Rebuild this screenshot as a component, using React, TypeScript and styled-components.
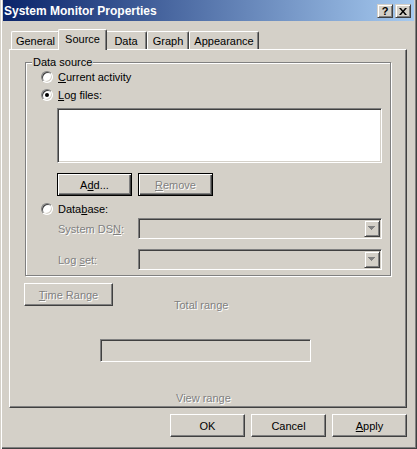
import React from 'react';
import styled, { createGlobalStyle, css } from 'styled-components';

const FACE = '#d4d0c8';

const Global = createGlobalStyle`
  html, body { margin: 0; padding: 0; background: ${FACE}; }
  body {
    font-family: "Liberation Sans", Arial, sans-serif;
    font-size: 11px;
    color: #000;
  }
`;

const Window = styled.div`
  width: 417px;
  height: 449px;
  box-sizing: border-box;
  background: ${FACE};
  display: flex;
  flex-direction: column;
  box-shadow: inset 1px 0 ${FACE}, inset 2px 0 #fff, inset -1px -1px #404040,
    inset -2px -2px #808080;
`;

const TitleBar = styled.div`
  height: 21px;
  margin: 0 3px;
  padding: 1px 3px 0 1px;
  box-sizing: border-box;
  background: linear-gradient(to right, #0a246a, #a6caf0);
  display: flex;
  align-items: center;
`;

const TitleText = styled.div`
  flex: 1;
  color: #fff;
  font-weight: bold;
  font-size: 12px;
  white-space: nowrap;
`;

const CaptionButton = styled.div`
  width: 16px;
  height: 14px;
  box-sizing: border-box;
  margin-left: 2px;
  background: ${FACE};
  border: 1px solid;
  border-color: ${FACE} #404040 #404040 ${FACE};
  box-shadow: inset 1px 1px #fff, inset -1px -1px #808080;
  display: flex;
  align-items: center;
  justify-content: center;
  font-weight: bold;
  font-size: 11px;
  line-height: 12px;
  color: #000;
`;

const Body = styled.div`
  flex: 1;
  display: flex;
  flex-direction: column;
  padding: 0 10px 0 9px;
`;

const TabStrip = styled.div`
  display: flex;
  align-items: flex-end;
  height: 20px;
  margin-top: 8px;
  padding-left: 2px;
`;

const Tab = styled.div<{ $w: number; $active?: boolean }>`
  width: ${(p) => p.$w}px;
  height: 18px;
  box-sizing: border-box;
  background: ${FACE};
  border-top: 1px solid #fff;
  border-left: 1px solid #fff;
  border-right: 1px solid #404040;
  border-radius: 2px 2px 0 0;
  box-shadow: inset -1px 0 #808080;
  display: flex;
  align-items: center;
  justify-content: center;
  padding-top: 1px;
  white-space: nowrap;
  ${(p) =>
    p.$active &&
    css`
      position: relative;
      z-index: 1;
      width: ${p.$w + 4}px;
      height: 21px;
      margin: 0 -2px -1px -2px;
      padding-top: 0;
      padding-bottom: 3px;
    `}
`;

const Panel = styled.div`
  height: 359px;
  box-sizing: border-box;
  border: 1px solid;
  border-color: #fff #404040 #404040 #fff;
  box-shadow: inset -1px -1px #808080;
  display: flex;
  flex-direction: column;
`;

const GroupBox = styled.div`
  position: relative;
  margin: 12px 15px 0 15px;
  height: 214px;
  box-sizing: border-box;
  border: 1px solid #808080;
  box-shadow: inset 1px 1px #fff, 1px 1px #fff;
  display: flex;
  flex-direction: column;
  padding: 7px 0 0 15px;
`;

const Legend = styled.span`
  position: absolute;
  top: -7px;
  left: 6px;
  padding: 0 1px;
  background: ${FACE};
  line-height: 13px;
`;

const RadioRow = styled.label<{ $mt: number }>`
  display: flex;
  align-items: center;
  height: 14px;
  margin-top: ${(p) => p.$mt}px;
  line-height: 13px;
`;

const Radio = styled.span<{ $checked?: boolean }>`
  width: 12px;
  height: 12px;
  box-sizing: border-box;
  border-radius: 50%;
  border: 1px solid;
  border-color: #808080 #fff #fff #808080;
  background: #fff;
  box-shadow: inset 1px 1px #404040, inset -1px -1px ${FACE};
  margin-right: 5px;
  display: flex;
  align-items: center;
  justify-content: center;
  &::after {
    content: '';
    width: 4px;
    height: 4px;
    border-radius: 50%;
    background: #000;
    display: ${(p) => (p.$checked ? 'block' : 'none')};
  }
`;

const sunken = css`
  box-sizing: border-box;
  border: 1px solid;
  border-color: #808080 #fff #fff #808080;
  box-shadow: inset 1px 1px #404040, inset -1px -1px ${FACE};
`;

const ListBox = styled.div`
  ${sunken};
  width: 325px;
  height: 55px;
  margin: 6px 0 0 16px;
  background: #fff;
`;

const ButtonRow = styled.div`
  display: flex;
  gap: 6px;
  margin: 10px 0 0 16px;
`;

const Button = styled.div<{ $w?: number; $framed?: boolean; $disabled?: boolean }>`
  width: ${(p) => p.$w ?? 75}px;
  height: 23px;
  box-sizing: border-box;
  background: ${FACE};
  border: 1px solid;
  border-color: #fff #404040 #404040 #fff;
  box-shadow: inset -1px -1px #808080;
  display: flex;
  align-items: center;
  justify-content: center;
  white-space: nowrap;
  color: ${(p) => (p.$disabled ? '#808080' : '#000')};
  text-shadow: ${(p) => (p.$disabled ? '1px 1px 0 #fff' : 'none')};
  ${(p) =>
    p.$framed &&
    css`
      border-color: #000;
      box-shadow: inset 1px 1px #fff, inset -1px -1px #404040, inset -2px -2px #808080;
    `}
`;

const FieldRow = styled.div<{ $mt: number }>`
  display: flex;
  align-items: center;
  height: 21px;
  margin-top: ${(p) => p.$mt}px;
`;

const FieldLabel = styled.span`
  width: 97px;
  padding-left: 17px;
  box-sizing: border-box;
  color: #808080;
  text-shadow: 1px 1px 0 #fff;
  white-space: nowrap;
`;

const Combo = styled.div`
  ${sunken};
  width: 244px;
  height: 21px;
  background: ${FACE};
  display: flex;
  justify-content: flex-end;
  padding: 1px;
`;

const ComboButton = styled.div`
  width: 16px;
  height: 17px;
  box-sizing: border-box;
  border: 1px solid;
  border-color: ${FACE} #404040 #404040 ${FACE};
  box-shadow: inset 1px 1px #fff, inset -1px -1px #808080;
  display: flex;
  align-items: center;
  justify-content: center;
`;

const RangeRow = styled.div`
  display: flex;
  align-items: flex-start;
  margin: 7px 0 0 14px;
  height: 29px;
`;

const DimLabel = styled.span<{ $ml: number; $mt: number }>`
  margin-left: ${(p) => p.$ml}px;
  margin-top: ${(p) => p.$mt}px;
  line-height: 13px;
  color: #808080;
  text-shadow: 1px 1px 0 #fff;
  white-space: nowrap;
  align-self: flex-start;
`;

const RangeBox = styled.div`
  ${sunken};
  width: 211px;
  height: 23px;
  margin: 27px 0 0 90px;
  background: ${FACE};
`;

const Footer = styled.div`
  display: flex;
  justify-content: flex-end;
  gap: 6px;
  margin-top: 6px;
`;

const Arrow = () => (
  <svg width="8" height="5" viewBox="0 0 8 5">
    <path d="M1 1h5v1h-1v1h-1v1h-1v-1h-1v-1h-1z" fill="#fff" />
    <path d="M0 0h7v1h-1v1h-1v1h-1v1h-1v-1h-1v-1h-1v-1h-1z" fill="#808080" />
  </svg>
);

const CloseGlyph = () => (
  <svg width="8" height="7" viewBox="0 0 8 7">
    <path d="M0 0h2l2 2.5L6 0h2L5 3.5 8 7H6L4 4.5 2 7H0l3-3.5z" fill="#000" />
  </svg>
);

export default function App() {
  return (
    <>
      <Global />
      <Window>
        <TitleBar>
          <TitleText>System Monitor Properties</TitleText>
          <CaptionButton>?</CaptionButton>
          <CaptionButton>
            <CloseGlyph />
          </CaptionButton>
        </TitleBar>
        <Body>
          <TabStrip>
            <Tab $w={49}>General</Tab>
            <Tab $w={45} $active>
              Source
            </Tab>
            <Tab $w={42}>Data</Tab>
            <Tab $w={42}>Graph</Tab>
            <Tab $w={70}>Appearance</Tab>
          </TabStrip>
          <Panel>
            <GroupBox>
              <Legend>Data source</Legend>
              <RadioRow $mt={0}>
                <Radio />
                <span>
                  <u>C</u>urrent activity
                </span>
              </RadioRow>
              <RadioRow $mt={4}>
                <Radio $checked />
                <span>
                  <u>L</u>og files:
                </span>
              </RadioRow>
              <ListBox />
              <ButtonRow>
                <Button $framed>
                  <span>
                    A<u>d</u>d...
                  </span>
                </Button>
                <Button $framed $disabled>
                  <span>
                    <u>R</u>emove
                  </span>
                </Button>
              </ButtonRow>
              <RadioRow $mt={6}>
                <Radio />
                <span>
                  Data<u>b</u>ase:
                </span>
              </RadioRow>
              <FieldRow $mt={2}>
                <FieldLabel>
                  System DS<u>N</u>:
                </FieldLabel>
                <Combo>
                  <ComboButton>
                    <Arrow />
                  </ComboButton>
                </Combo>
              </FieldRow>
              <FieldRow $mt={10}>
                <FieldLabel>
                  Log <u>s</u>et:
                </FieldLabel>
                <Combo>
                  <ComboButton>
                    <Arrow />
                  </ComboButton>
                </Combo>
              </FieldRow>
            </GroupBox>
            <RangeRow>
              <Button $w={89} $disabled>
                <span>
                  <u>T</u>ime Range
                </span>
              </Button>
              <DimLabel $ml={61} $mt={16}>
                Total range
              </DimLabel>
            </RangeRow>
            <RangeBox />
            <DimLabel $ml={166} $mt={30}>
              View range
            </DimLabel>
          </Panel>
          <Footer>
            <Button>OK</Button>
            <Button>Cancel</Button>
            <Button>
              <span>
                <u>A</u>pply
              </span>
            </Button>
          </Footer>
        </Body>
      </Window>
    </>
  );
}
